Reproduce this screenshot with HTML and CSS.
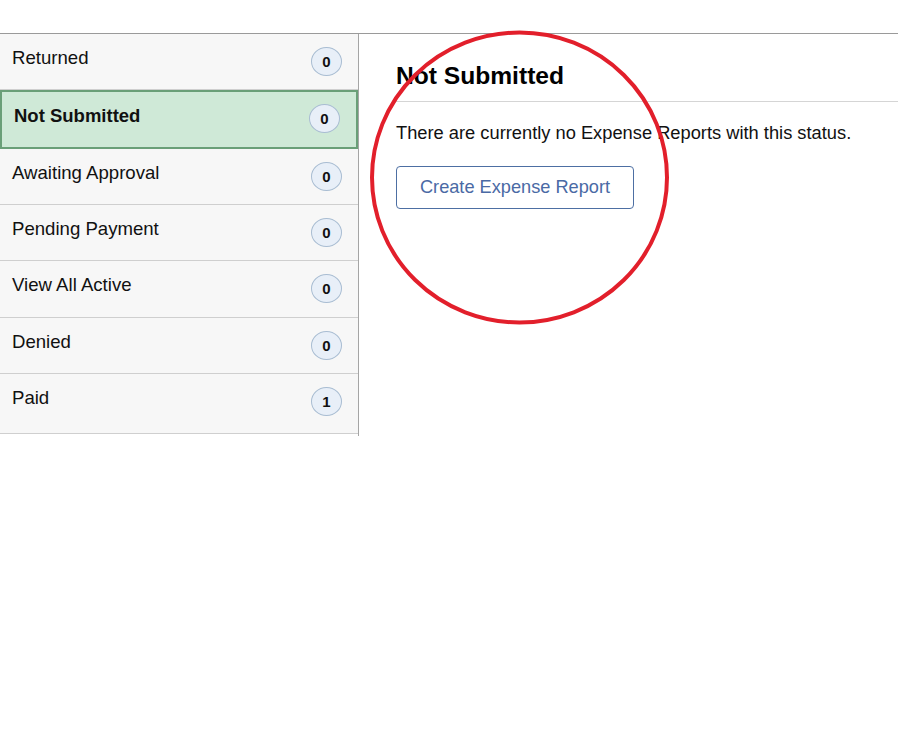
FILE: index.html
```
<!DOCTYPE html>
<html>
<head>
<meta charset="utf-8">
<link rel="stylesheet" href="styles.css">
</head>
<body>
<div class="topbar"></div>
<div class="layout">
  <nav class="sidebar">
    <div class="row"><span class="label">Returned</span><span class="badge">0</span></div>
    <div class="row selected"><span class="label">Not Submitted</span><span class="badge">0</span></div>
    <div class="row"><span class="label">Awaiting Approval</span><span class="badge">0</span></div>
    <div class="row"><span class="label">Pending Payment</span><span class="badge">0</span></div>
    <div class="row tall"><span class="label">View All Active</span><span class="badge">0</span></div>
    <div class="row"><span class="label">Denied</span><span class="badge">0</span></div>
    <div class="row last"><span class="label">Paid</span><span class="badge">1</span></div>
  </nav>
  <main class="main">
    <div class="header"><h1 class="title">Not Submitted</h1></div>
    <p class="message">There are currently no Expense Reports with this status.</p>
    <button class="create">Create Expense Report</button>
  </main>
</div>
<svg class="annotation" width="898" height="731" viewBox="0 0 898 731">
  <ellipse cx="519.5" cy="177.5" rx="147.5" ry="145" fill="none" stroke="#e21f2b" stroke-width="4"/>
</svg>
</body>
</html>
```
FILE: styles.css
```
html, body {
  margin: 0;
  padding: 0;
  background: #fff;
}
body {
  font-family: "Liberation Sans", Arial, sans-serif;
  color: #111;
  position: relative;
  width: 898px;
  height: 731px;
  overflow: hidden;
}
.topbar {
  height: 33px;
  border-bottom: 1px solid #9a9a9a;
}
.layout {
  display: flex;
  align-items: flex-start;
}
.sidebar {
  width: 358px;
  border-right: 1px solid #a5a5a5;
  padding-bottom: 2px;
  flex-shrink: 0;
}
.row {
  display: flex;
  justify-content: space-between;
  align-items: flex-start;
  height: 55px;
  background: #f7f7f7;
  border-bottom: 1px solid #cfcfcf;
  padding: 0 16px 0 12px;
}
.row.tall {
  height: 56px;
}
.row.last {
  height: 59px;
}
.label {
  font-size: 18.6px;
  line-height: 22px;
  padding-top: 13px;
}
.badge {
  margin-top: 13px;
  width: 31px;
  height: 29px;
  border-radius: 50%;
  background: #e8eff8;
  border: 1px solid #a9bdd2;
  font-size: 15px;
  font-weight: bold;
  display: flex;
  align-items: center;
  justify-content: center;
  box-sizing: border-box;
}
.row.selected {
  background: #cfe9d7;
  border: 2px solid #6a9f78;
  height: 55px;
  padding: 0 16px 0 12px;
}
.row.selected .label {
  font-weight: bold;
  font-size: 18.5px;
  padding-top: 13px;
}
.row.selected .badge {
  margin-top: 12px;
}
.main {
  flex: 1;
  padding-left: 37px;
}
.header {
  padding-top: 28px;
  padding-bottom: 11px;
  border-bottom: 1px solid #d5d5d5;
}
.title {
  margin: 0;
  font-size: 24.6px;
  line-height: 28px;
  font-weight: bold;
  color: #000;
}
.message {
  margin: 20px 0 0 0;
  font-size: 18.3px;
  line-height: 21px;
  color: #111;
}
.create {
  margin-top: 23px;
  width: 238px;
  height: 43px;
  background: #fff;
  border: 1px solid #4d6fa3;
  border-radius: 4px;
  color: #4a6aa5;
  font-family: "Liberation Sans", Arial, sans-serif;
  font-size: 18.2px;
  padding: 0;
}
.annotation {
  position: absolute;
  left: 0;
  top: 0;
  pointer-events: none;
}
```
